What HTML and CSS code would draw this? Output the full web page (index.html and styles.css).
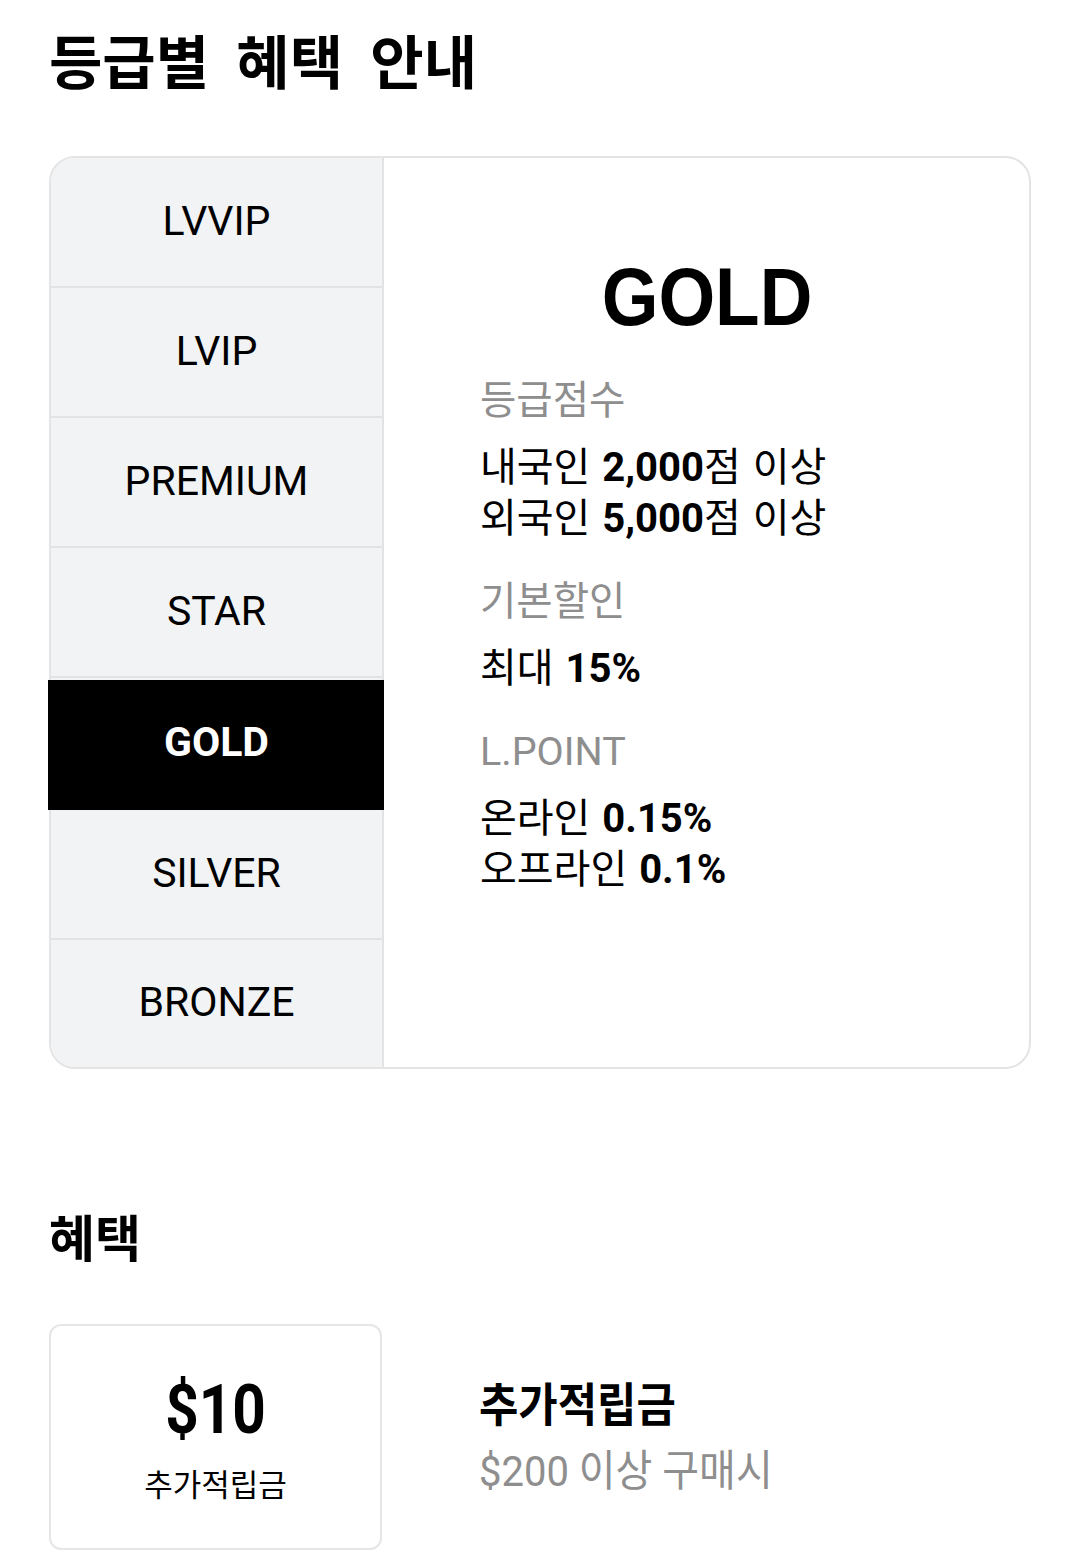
FILE: index.html
```html
<!DOCTYPE html>
<html lang="ko">
<head>
<meta charset="utf-8">
<title>등급별 혜택 안내</title>
<link rel="stylesheet" href="styles.css">
</head>
<body>
<main class="page">
  <h1 class="title">등급별 혜택 안내</h1>

  <section class="grade-card">
    <ul class="grade-list">
      <li class="grade">LVVIP</li>
      <li class="grade">LVIP</li>
      <li class="grade">PREMIUM</li>
      <li class="grade">STAR</li>
      <li class="grade active">GOLD</li>
      <li class="grade">SILVER</li>
      <li class="grade">BRONZE</li>
    </ul>
    <div class="grade-detail">
      <h2 class="detail-name"><span class="detail-name-text">GOLD</span></h2>
      <dl class="info-list">
        <div class="info">
          <dt class="info-label">등급점수</dt>
          <dd class="info-value">내국인 <b>2,000</b>점 이상</dd>
          <dd class="info-value">외국인 <b>5,000</b>점 이상</dd>
        </div>
        <div class="info">
          <dt class="info-label">기본할인</dt>
          <dd class="info-value">최대 <b>15%</b></dd>
        </div>
        <div class="info">
          <dt class="info-label">L.POINT</dt>
          <dd class="info-value">온라인 <b>0.15%</b></dd>
          <dd class="info-value">오프라인 <b>0.1%</b></dd>
        </div>
      </dl>
    </div>
  </section>

  <h2 class="sub-title">혜택</h2>

  <section class="benefit">
    <div class="benefit-card">
      <div class="amount"><span class="squeeze">$10</span></div>
      <div class="amount-label">추가적립금</div>
    </div>
    <div class="benefit-text">
      <div class="benefit-name"><span class="squeeze-light">추가적립금</span></div>
      <div class="benefit-cond"><span class="squeeze-light">$200 이상 구매시</span></div>
    </div>
  </section>
</main>
</body>
</html>
```
FILE: styles.css
```css
* { box-sizing: border-box; }

html, body {
  margin: 0;
  padding: 0;
  background: #fff;
}

body {
  font-family: Roboto, "Noto Sans CJK KR", sans-serif;
  color: #000;
}

.page {
  padding: 0 49px;
}

.title {
  margin: 0;
  padding-top: 19px;
  height: 156px;
  font-size: 58px;
  font-weight: 700;
  line-height: 80px;
  font-family: "Noto Sans CJK KR", sans-serif;
  word-spacing: 11px;
}

.grade-card {
  display: flex;
  height: 913px;
  border: 2px solid #e4e4e4;
  border-radius: 26px;
}

.grade-list {
  list-style: none;
  margin: 0;
  padding: 0;
  width: 333px;
  flex: none;
  background: #f2f3f5;
  border-right: 2px solid #e2e3e5;
  border-radius: 24px 0 0 24px;
  display: flex;
  flex-direction: column;
}

.grade {
  height: 130px;
  flex: none;
  display: flex;
  align-items: center;
  justify-content: center;
  font-size: 41px;
  border-bottom: 2px solid #e2e3e5;
  padding-bottom: 3px;
}

.grade:last-child {
  border-bottom: none;
  flex: 1;
  height: auto;
}

.grade.active {
  background: #000;
  color: #fff;
  font-weight: 700;
  margin: 2px -2px 0 -3px;
  padding: 0 0 6px 1px;
  border-bottom: none;
}

.grade-detail {
  flex: 1;
  padding-top: 91px;
}

.detail-name {
  margin: 0;
  text-align: center;
  font-family: "Liberation Sans", Arial, sans-serif;
  font-size: 81px;
  font-weight: 700;
  line-height: 96px;
}

.detail-name-text {
  display: inline-block;
  transform: scaleX(0.9);
}

.info-list {
  margin: 30px 0 0;
  padding-left: 96px;
}

.info {
  margin-bottom: 32px;
}

.info-label {
  color: #8e8e8e;
  font-size: 39.5px;
  line-height: 51px;
  margin-bottom: 16px;
}

.info-value {
  margin: 0;
  font-size: 40px;
  line-height: 51px;
  word-spacing: 2px;
}

.info-value b {
  font-weight: 700;
}

.sub-title {
  margin: 0;
  padding-top: 134px;
  height: 255px;
  font-size: 50px;
  font-weight: 700;
  line-height: 64px;
  font-family: "Noto Sans CJK KR", sans-serif;
}

.benefit {
  display: flex;
  align-items: flex-start;
}

.benefit-card {
  width: 333px;
  height: 226px;
  flex: none;
  border: 2px solid #e6e6e6;
  border-radius: 12px;
  display: flex;
  flex-direction: column;
  align-items: center;
  padding-top: 44px;
}

.squeeze {
  display: inline-block;
  transform: scaleX(0.86);
}

.squeeze-light {
  display: inline-block;
  transform: scaleX(0.93);
  transform-origin: left center;
}

.amount {
  font-size: 68px;
  font-weight: 700;
  line-height: 80px;
}

.amount-label {
  font-size: 31px;
  line-height: 40px;
  margin-top: 16px;
}

.benefit-text {
  padding-left: 97px;
  padding-top: 51px;
}

.benefit-name {
  font-size: 46px;
  font-weight: 700;
  line-height: 60px;
}

.benefit-cond {
  font-size: 43px;
  line-height: 60px;
  margin-top: 6px;
  color: #8e8e8e;
}
```
